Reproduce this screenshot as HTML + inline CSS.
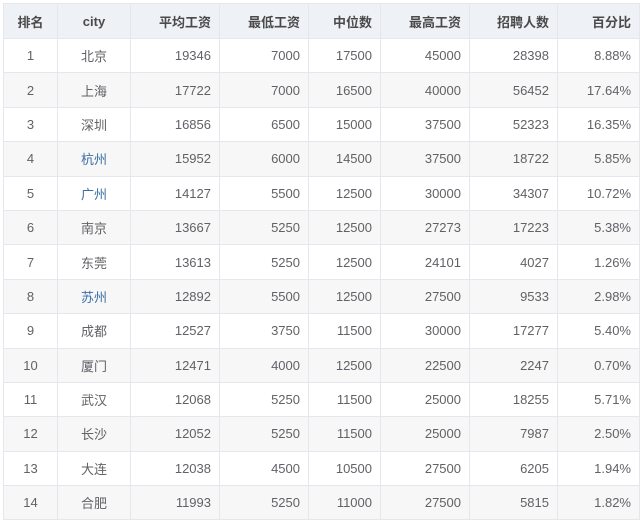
<!DOCTYPE html>
<html><head><meta charset="utf-8"><style>
body{margin:0;background:#fff;}
table{position:absolute;left:3px;top:3px;border-collapse:collapse;table-layout:fixed;width:636px;font-family:"Liberation Sans","Noto Sans CJK SC",sans-serif;font-size:13px;color:#606266;}
td,th{border:1px solid #e4e7ed;padding:0 8px;white-space:nowrap;}
th{height:34px;background:#eef1f6;color:#4a4a4a;font-weight:bold;}
td{height:33.4px;}
tr:nth-child(odd) td{background:#f7f7f7;}
.c{text-align:center}.r{text-align:right}
.b{color:#3a6ea5}
</style></head><body>
<table>
<colgroup><col style="width:54px"><col style="width:73px"><col style="width:89px"><col style="width:89px"><col style="width:72px"><col style="width:89px"><col style="width:88px"><col style="width:82px"></colgroup>
<tr><th class="c">排名</th><th class="c">city</th><th class="r">平均工资</th><th class="r">最低工资</th><th class="r">中位数</th><th class="r">最高工资</th><th class="r">招聘人数</th><th class="r">百分比</th></tr>
<tr><td class="c">1</td><td class="c">北京</td><td class="r">19346</td><td class="r">7000</td><td class="r">17500</td><td class="r">45000</td><td class="r">28398</td><td class="r">8.88%</td></tr>
<tr><td class="c">2</td><td class="c">上海</td><td class="r">17722</td><td class="r">7000</td><td class="r">16500</td><td class="r">40000</td><td class="r">56452</td><td class="r">17.64%</td></tr>
<tr><td class="c">3</td><td class="c">深圳</td><td class="r">16856</td><td class="r">6500</td><td class="r">15000</td><td class="r">37500</td><td class="r">52323</td><td class="r">16.35%</td></tr>
<tr><td class="c">4</td><td class="c b">杭州</td><td class="r">15952</td><td class="r">6000</td><td class="r">14500</td><td class="r">37500</td><td class="r">18722</td><td class="r">5.85%</td></tr>
<tr><td class="c">5</td><td class="c b">广州</td><td class="r">14127</td><td class="r">5500</td><td class="r">12500</td><td class="r">30000</td><td class="r">34307</td><td class="r">10.72%</td></tr>
<tr><td class="c">6</td><td class="c">南京</td><td class="r">13667</td><td class="r">5250</td><td class="r">12500</td><td class="r">27273</td><td class="r">17223</td><td class="r">5.38%</td></tr>
<tr><td class="c">7</td><td class="c">东莞</td><td class="r">13613</td><td class="r">5250</td><td class="r">12500</td><td class="r">24101</td><td class="r">4027</td><td class="r">1.26%</td></tr>
<tr><td class="c">8</td><td class="c b">苏州</td><td class="r">12892</td><td class="r">5500</td><td class="r">12500</td><td class="r">27500</td><td class="r">9533</td><td class="r">2.98%</td></tr>
<tr><td class="c">9</td><td class="c">成都</td><td class="r">12527</td><td class="r">3750</td><td class="r">11500</td><td class="r">30000</td><td class="r">17277</td><td class="r">5.40%</td></tr>
<tr><td class="c">10</td><td class="c">厦门</td><td class="r">12471</td><td class="r">4000</td><td class="r">12500</td><td class="r">22500</td><td class="r">2247</td><td class="r">0.70%</td></tr>
<tr><td class="c">11</td><td class="c">武汉</td><td class="r">12068</td><td class="r">5250</td><td class="r">11500</td><td class="r">25000</td><td class="r">18255</td><td class="r">5.71%</td></tr>
<tr><td class="c">12</td><td class="c">长沙</td><td class="r">12052</td><td class="r">5250</td><td class="r">11500</td><td class="r">25000</td><td class="r">7987</td><td class="r">2.50%</td></tr>
<tr><td class="c">13</td><td class="c">大连</td><td class="r">12038</td><td class="r">4500</td><td class="r">10500</td><td class="r">27500</td><td class="r">6205</td><td class="r">1.94%</td></tr>
<tr><td class="c">14</td><td class="c">合肥</td><td class="r">11993</td><td class="r">5250</td><td class="r">11000</td><td class="r">27500</td><td class="r">5815</td><td class="r">1.82%</td></tr>
</table>
</body></html>
